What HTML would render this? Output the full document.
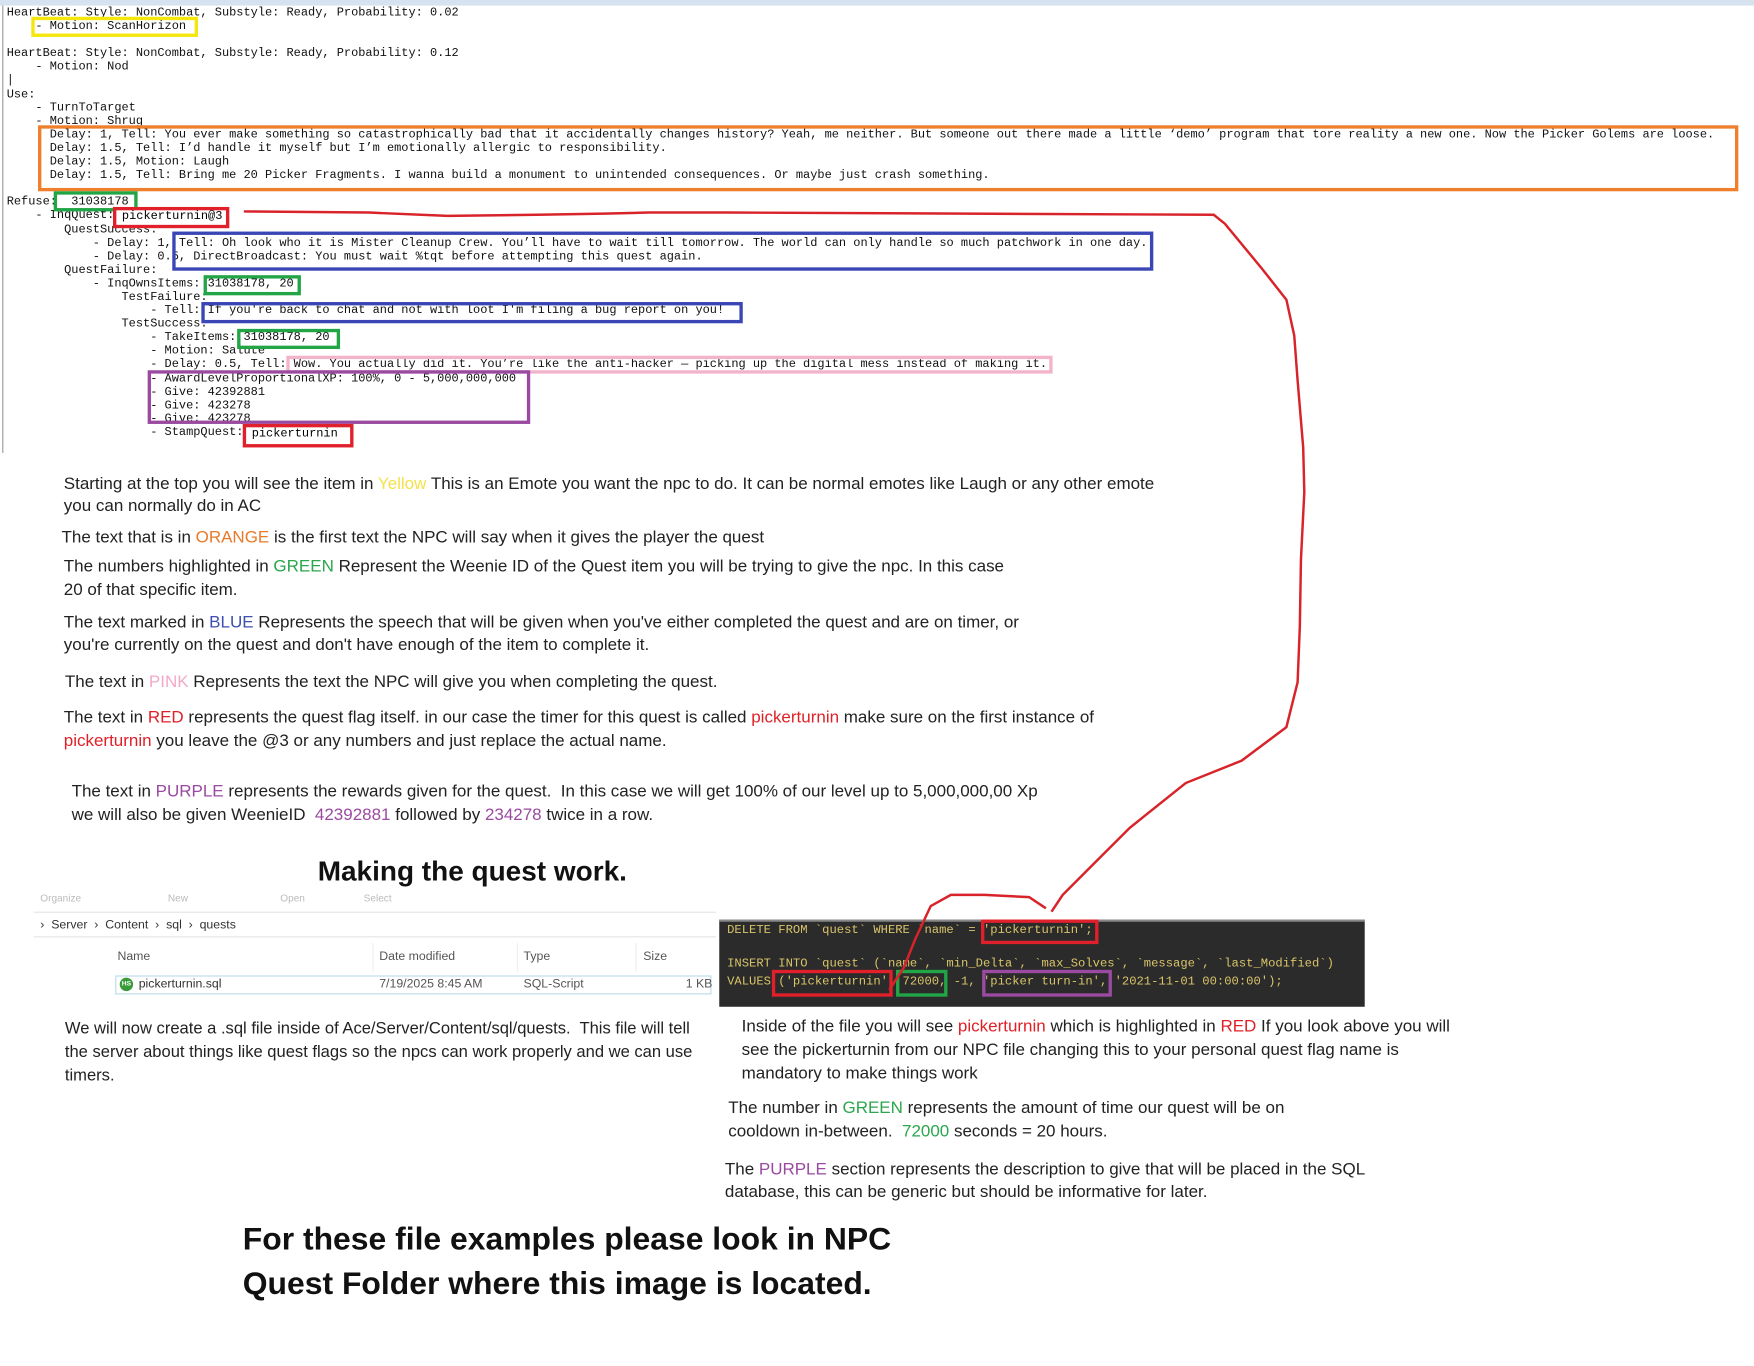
<!DOCTYPE html>
<html><head><meta charset="utf-8"><style>
html,body{margin:0;padding:0;background:#fff;width:1754px;height:1366px;overflow:hidden}
#w{position:absolute;left:0;top:0;width:1568px;height:1221px;transform:scale(1.11862);transform-origin:0 0}
.a{position:absolute}
pre{position:absolute;left:6px;top:6px;margin:0;font-family:"Liberation Mono",monospace;font-size:10.7px;line-height:12.1px;color:#111}
.b{position:absolute;box-sizing:border-box;border:3px solid}
.t{position:absolute;font-family:"Liberation Sans",sans-serif;font-size:15.2px;color:#222;white-space:nowrap;line-height:20.5px}
.h{position:absolute;font-family:"Liberation Sans",sans-serif;font-weight:bold;color:#111;white-space:nowrap}
.y{color:#f3e24a}.o{color:#e87a2a}.g{color:#2aa64c}.bl{color:#3d4fb0}.p{color:#f2a9c8}.r{color:#e02028}.pu{color:#9a4aa0}
.sq{position:absolute;font-family:"Liberation Mono",monospace;font-size:10.9px;color:#d9c46a;white-space:pre}
.e{position:absolute;font-family:"Liberation Sans",sans-serif;font-size:11px;color:#333;white-space:nowrap}
</style></head><body><div id="w">
<div class="a" style="left:0;top:0;width:1568px;height:5px;background:#d6e2f0"></div>
<div class="a" style="left:2px;top:5px;width:1px;height:400px;background:#999"></div>
<pre>HeartBeat: Style: NonCombat, Substyle: Ready, Probability: 0.02
    - Motion: ScanHorizon

HeartBeat: Style: NonCombat, Substyle: Ready, Probability: 0.12
    - Motion: Nod
|
Use:
    - TurnToTarget
    - Motion: Shrug
      Delay: 1, Tell: You ever make something so catastrophically bad that it accidentally changes history? Yeah, me neither. But someone out there made a little ‘demo’ program that tore reality a new one. Now the Picker Golems are loose.
      Delay: 1.5, Tell: I’d handle it myself but I’m emotionally allergic to responsibility.
      Delay: 1.5, Motion: Laugh
      Delay: 1.5, Tell: Bring me 20 Picker Fragments. I wanna build a monument to unintended consequences. Or maybe just crash something.

Refuse:  31038178
    - InqQuest: pickerturnin@3
        QuestSuccess:
            - Delay: 1, Tell: Oh look who it is Mister Cleanup Crew. You’ll have to wait till tomorrow. The world can only handle so much patchwork in one day.
            - Delay: 0.5, DirectBroadcast: You must wait %tqt before attempting this quest again.
        QuestFailure:
            - InqOwnsItems: 31038178, 20
                TestFailure:
                    - Tell: If you're back to chat and not with loot I'm filing a bug report on you!
                TestSuccess:
                    - TakeItems: 31038178, 20
                    - Motion: Salute
                    - Delay: 0.5, Tell: Wow. You actually did it. You’re like the anti-hacker — picking up the digital mess instead of making it.
                    - AwardLevelProportionalXP: 100%, 0 - 5,000,000,000
                    - Give: 42392881
                    - Give: 423278
                    - Give: 423278
                    - StampQuest: pickerturnin</pre>
<div class="b" style="left:28px;top:15px;width:149px;height:18px;border-color:#f5e60c"></div>
<div class="b" style="left:34px;top:112px;width:1520px;height:59px;border-color:#ee7f2d"></div>
<div class="b" style="left:48px;top:171px;width:75px;height:18px;border-color:#22a545"></div>
<div class="b" style="left:101px;top:185px;width:104px;height:19px;border-color:#e0202a;background:#fff"></div>
<div class="a" style="left:109px;top:188px;font-family:'Liberation Mono',monospace;font-size:10.7px">pickerturnin@3</div>
<div class="b" style="left:154px;top:207px;width:877px;height:35px;border-color:#3a46b5"></div>
<div class="b" style="left:182px;top:246px;width:87px;height:18px;border-color:#22a545"></div>
<div class="b" style="left:180px;top:270px;width:484px;height:19px;border-color:#3a46b5"></div>
<div class="b" style="left:212px;top:294px;width:92px;height:18px;border-color:#22a545"></div>
<div class="b" style="left:256px;top:318px;width:685px;height:16px;border-color:#f3b3cb"></div>
<div class="b" style="left:132px;top:331px;width:342px;height:48px;border-color:#9a4aa0"></div>
<div class="b" style="left:217px;top:379px;width:99px;height:21px;border-color:#e0202a;background:#fff"></div>
<div class="a" style="left:225px;top:382px;font-family:'Liberation Mono',monospace;font-size:10.7px">pickerturnin</div>

<div class="t" style="left:57px;top:423px">Starting at the top you will see the item in <span class="y">Yellow</span> This is an Emote you want the npc to do. It can be normal emotes like Laugh or any other emote</div>
<div class="t" style="left:57px;top:443px">you can normally do in AC</div>
<div class="t" style="left:55px;top:471px">The text that is in <span class="o">ORANGE</span> is the first text the NPC will say when it gives the player the quest</div>
<div class="t" style="left:57px;top:497px">The numbers highlighted in <span class="g">GREEN</span> Represent the Weenie ID of the Quest item you will be trying to give the npc. In this case</div>
<div class="t" style="left:57px;top:518px">20 of that specific item.</div>
<div class="t" style="left:57px;top:547px">The text marked in <span class="bl">BLUE</span> Represents the speech that will be given when you've either completed the quest and are on timer, or</div>
<div class="t" style="left:57px;top:567px">you're currently on the quest and don't have enough of the item to complete it.</div>
<div class="t" style="left:58px;top:600px">The text in <span class="p">PINK</span> Represents the text the NPC will give you when completing the quest.</div>
<div class="t" style="left:57px;top:632px">The text in <span class="r">RED</span> represents the quest flag itself. in our case the timer for this quest is called <span class="r">pickerturnin</span> make sure on the first instance of</div>
<div class="t" style="left:57px;top:653px"><span class="r">pickerturnin</span> you leave the @3 or any numbers and just replace the actual name.</div>
<div class="t" style="left:64px;top:698px">The text in <span class="pu">PURPLE</span> represents the rewards given for the quest.&nbsp; In this case we will get 100% of our level up to 5,000,000,00 Xp</div>
<div class="t" style="left:64px;top:719px">we will also be given WeenieID&nbsp; <span class="pu">42392881</span> followed by <span class="pu">234278</span> twice in a row.</div>
<div class="h" style="left:284px;top:765px;font-size:25px">Making the quest work.</div>

<div class="e" style="left:36px;top:798px;color:#bbb;font-size:9px">Organize&nbsp;&nbsp;&nbsp;&nbsp;&nbsp;&nbsp;&nbsp;&nbsp;&nbsp;&nbsp;&nbsp;&nbsp;&nbsp;&nbsp;&nbsp;&nbsp;&nbsp;&nbsp;&nbsp;&nbsp;&nbsp;&nbsp;&nbsp;&nbsp;&nbsp;&nbsp;&nbsp;&nbsp;&nbsp;&nbsp;&nbsp;New&nbsp;&nbsp;&nbsp;&nbsp;&nbsp;&nbsp;&nbsp;&nbsp;&nbsp;&nbsp;&nbsp;&nbsp;&nbsp;&nbsp;&nbsp;&nbsp;&nbsp;&nbsp;&nbsp;&nbsp;&nbsp;&nbsp;&nbsp;&nbsp;&nbsp;&nbsp;&nbsp;&nbsp;&nbsp;&nbsp;&nbsp;&nbsp;&nbsp;Open&nbsp;&nbsp;&nbsp;&nbsp;&nbsp;&nbsp;&nbsp;&nbsp;&nbsp;&nbsp;&nbsp;&nbsp;&nbsp;&nbsp;&nbsp;&nbsp;&nbsp;&nbsp;&nbsp;&nbsp;&nbsp;Select</div>
<div class="a" style="left:30px;top:815px;width:610px;height:1px;background:#e4e4e4"></div>
<div class="e" style="left:36px;top:821px">›&nbsp; Server &nbsp;›&nbsp; Content &nbsp;›&nbsp; sql &nbsp;›&nbsp; quests</div>
<div class="a" style="left:30px;top:837px;width:610px;height:1px;background:#e4e4e4"></div>
<div class="e" style="left:105px;top:849px;color:#555">Name</div>
<div class="e" style="left:339px;top:849px;color:#555">Date modified</div>
<div class="e" style="left:468px;top:849px;color:#555">Type</div>
<div class="e" style="left:575px;top:849px;color:#555">Size</div>
<div class="a" style="left:333px;top:843px;width:1px;height:26px;background:#eee"></div>
<div class="a" style="left:462px;top:843px;width:1px;height:26px;background:#eee"></div>
<div class="a" style="left:568px;top:843px;width:1px;height:26px;background:#eee"></div>
<div class="a" style="left:103px;top:872px;width:533px;height:17px;border:1px solid #b9dbea;box-sizing:border-box"></div>
<div class="a" style="left:107px;top:874px;width:12px;height:12px;border-radius:50%;background:#3a9a3a;color:#fff;font:bold 6px 'Liberation Sans',sans-serif;text-align:center;line-height:12px">HS</div>
<div class="e" style="left:124px;top:874px">pickerturnin.sql</div>
<div class="e" style="left:339px;top:874px;color:#555">7/19/2025 8:45 AM</div>
<div class="e" style="left:468px;top:874px;color:#555">SQL-Script</div>
<div class="e" style="left:613px;top:874px;color:#555">1 KB</div>

<div class="a" style="left:643px;top:822px;width:577px;height:76px;background:#2b2b2b;border-top:2px solid #888"></div>
<div class="sq" style="left:650px;top:826px">DELETE FROM `quest` WHERE `name` = 'pickerturnin';</div>
<div class="sq" style="left:650px;top:856px">INSERT INTO `quest` (`name`, `min_Delta`, `max_Solves`, `message`, `last_Modified`)</div>
<div class="sq" style="left:650px;top:872px">VALUES ('pickerturnin', 72000, -1, 'picker turn-in', '2021-11-01 00:00:00');</div>
<div class="b" style="left:877px;top:822px;width:105px;height:22px;border-color:#e0202a"></div>
<div class="b" style="left:690px;top:867px;width:108px;height:24px;border-color:#e0202a"></div>
<div class="b" style="left:801px;top:867px;width:46px;height:24px;border-color:#22a545"></div>
<div class="b" style="left:878px;top:867px;width:116px;height:24px;border-color:#9a4aa0"></div>

<svg class="a" style="left:0;top:0" width="1568" height="1221"><path d="M218 189 L330 190 L400 193 L480 192 L540 191 L580 190 L650 190 L1085 192 L1095 200 L1128 240 L1150 268 L1157 300 L1160 340 L1165 400 L1166 440 L1163 500 L1162 560 L1160 610 L1150 650 L1110 680 L1060 700 L1010 740 L975 775 L950 800 L940 815 M935 812 L920 802 L880 800 L850 800 L832 810 L818 840 L808 865 L795 885" fill="none" stroke="#d8232a" stroke-width="2.2"/></svg>

<div class="t" style="left:58px;top:910px;font-size:14.8px">We will now create a .sql file inside of Ace/Server/Content/sql/quests.&nbsp; This file will tell</div>
<div class="t" style="left:58px;top:931px;font-size:14.8px">the server about things like quest flags so the npcs can work properly and we can use</div>
<div class="t" style="left:58px;top:952px;font-size:14.8px">timers.</div>
<div class="t" style="left:663px;top:908px">Inside of the file you will see <span class="r">pickerturnin</span> which is highlighted in <span class="r">RED</span> If you look above you will</div>
<div class="t" style="left:663px;top:929px">see the pickerturnin from our NPC file changing this to your personal quest flag name is</div>
<div class="t" style="left:663px;top:950px">mandatory to make things work</div>
<div class="t" style="left:651px;top:981px">The number in <span class="g">GREEN</span> represents the amount of time our quest will be on</div>
<div class="t" style="left:651px;top:1002px">cooldown in-between.&nbsp; <span class="g">72000</span> seconds = 20 hours.</div>
<div class="t" style="left:648px;top:1036px">The <span class="pu">PURPLE</span> section represents the description to give that will be placed in the SQL</div>
<div class="t" style="left:648px;top:1056px">database, this can be generic but should be informative for later.</div>
<div class="h" style="left:217px;top:1092px;font-size:28.5px">For these file examples please look in NPC</div>
<div class="h" style="left:217px;top:1132px;font-size:28.5px">Quest Folder where this image is located.</div>
</div></body></html>
